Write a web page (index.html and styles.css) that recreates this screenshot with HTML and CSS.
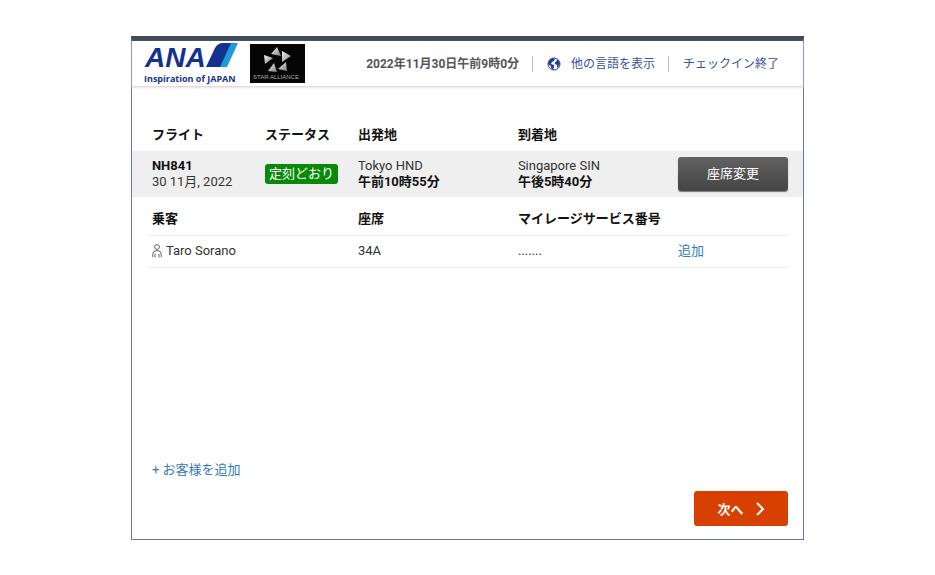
FILE: index.html
```
<!DOCTYPE html>
<html lang="ja">
<head>
    <meta charset="utf-8">
    <title>ANA チェックイン</title>
    <link rel="stylesheet" href="styles.css">
</head>
<body>
    <div class="kiosk">
        <!-- Header -->
        <header class="header">
            <div class="logos">
                <svg class="logo-ana" width="94" height="42" viewBox="0 0 94 42" role="img" aria-label="ANA">
                    <text class="ana-name" x="1" y="24">ANA</text>
                    <path d="M62 24 L71 5 Q74 0 79 0 H90 L79 24 Z" fill="#13318f"/>
                    <path d="M76 24 L87 0 H94 L83 24 Z" fill="#1d9ad8"/>
                    <text class="ana-tagline" x="0" y="39">Inspiration of JAPAN</text>
                </svg>
                <svg class="logo-star" width="55" height="39" viewBox="0 0 55 39" role="img" aria-label="STAR ALLIANCE">
                    <defs>
                        <linearGradient id="silver" x1="0" y1="0" x2="1" y2="1">
                            <stop offset="0" stop-color="#f4f4f4"/>
                            <stop offset="1" stop-color="#7c7c7c"/>
                        </linearGradient>
                    </defs>
                    <rect width="55" height="39" fill="#050505"/>
                    <g fill="url(#silver)">
                        <path d="M27 3 L31 12 L21 10 Z"/>
                        <path d="M32 7 L41 12 L32 18 Z"/>
                        <path d="M36 18 L37 27 L28 25 Z"/>
                        <path d="M24 19 L27 28 L18 27 Z"/>
                        <path d="M14 11 L23 14 L15 20 Z"/>
                    </g>
                    <text class="star-name" x="3" y="35">STAR ALLIANCE</text>
                </svg>
            </div>
            <nav class="nav">
                <span class="now">2022年11月30日午前9時0分</span>
                <a class="language" href="#language">
                    <svg width="14" height="14" viewBox="0 0 14 14" aria-hidden="true">
                        <circle cx="7" cy="7" r="6" fill="#fff" stroke="#24408e"/>
                        <path d="M1 6 L3 2 L6 1 L8 2 L7 4 L5 5 L4 7 L7 8 L7 10 L6 13 L4 11 L4 9 L2 8 Z" fill="#24408e"/>
                        <path d="M8 5 L10 4 L9 2 L12 4 L13 7 L12 8 L11 11 L10 10 L10 8 L8 7 Z" fill="#24408e"/>
                    </svg>
                    他の言語を表示
                </a>
                <a href="#exit">チェックイン終了</a>
            </nav>
        </header>

        <main>
            <!-- Flight -->
            <table class="flights">
                <colgroup>
                    <col class="col-flight"><col class="col-status"><col class="col-from"><col class="col-to"><col>
                </colgroup>
                <thead>
                    <tr>
                        <th>フライト</th>
                        <th>ステータス</th>
                        <th>出発地</th>
                        <th>到着地</th>
                        <td></td>
                    </tr>
                </thead>
                <tbody>
                    <tr>
                        <td><strong>NH841</strong><br>30 11月, 2022</td>
                        <td><span class="status">定刻どおり</span></td>
                        <td>Tokyo HND<br><strong>午前10時55分</strong></td>
                        <td>Singapore SIN<br><strong>午後5時40分</strong></td>
                        <td class="action"><button type="button" class="btn-seat">座席変更</button></td>
                    </tr>
                </tbody>
            </table>

            <!-- Passengers -->
            <div class="passengers-box">
                <table class="passengers">
                    <colgroup>
                        <col class="col-name"><col class="col-seat"><col class="col-number"><col>
                    </colgroup>
                    <thead>
                        <tr>
                            <th>乗客</th>
                            <th>座席</th>
                            <th>マイレージサービス番号</th>
                            <td></td>
                        </tr>
                    </thead>
                    <tbody>
                        <tr>
                            <td>
                                <span class="person">
                                    <svg width="10" height="14" viewBox="0 0 10 14" fill="none" stroke="#666" aria-hidden="true">
                                        <circle cx="5" cy="3" r="2.4"/>
                                        <path d="M0.8 13 V10 Q1 6.5 5 6.5 Q9 6.5 9.2 10 V13 M3 10 V13.5 M7 10 V13.5"/>
                                    </svg>
                                    Taro Sorano
                                </span>
                            </td>
                            <td>34A</td>
                            <td>.......</td>
                            <td><a href="#add-number">追加</a></td>
                        </tr>
                    </tbody>
                </table>
            </div>

            <div class="add-customer"><a href="#add-customer">+ お客様を追加</a></div>
        </main>

        <footer class="footer">
            <button type="button" class="btn-next">
                次へ
                <svg width="9" height="14" viewBox="0 0 9 14" fill="none" stroke="#fff" stroke-width="2" aria-hidden="true">
                    <path d="M1 1 L7 7 L1 13"/>
                </svg>
            </button>
        </footer>
    </div>
</body>
</html>
```
FILE: styles.css
```
* {
    box-sizing: border-box;
}

body {
    margin: 0;
    padding: 36px 14%;
    background: #fff;
    color: #333;
    font-family: Roboto, "Noto Sans CJK JP", sans-serif;
    font-size: 13px;
    line-height: 16px;
}

a {
    color: #337ab7;
    text-decoration: none;
}

button {
    border: none;
    border-radius: 3px;
    color: #fff;
    font-family: inherit;
    font-size: 13px;
    cursor: pointer;
}

.kiosk {
    border: 1px solid #6478b4;
    border-top: 5px solid #414b59;
}

/* Header */
.header {
    display: flex;
    justify-content: space-between;
    align-items: center;
    height: 46px;
    padding: 0 24px 0 12px;
    border-bottom: 1px solid #ddd;
    box-shadow: 0 1px 2px #e4e4e4;
}

.logos {
    display: flex;
    align-items: center;
    gap: 12px;
}

.ana-name {
    fill: #13318f;
    font: italic bold 28px "Liberation Sans", sans-serif;
}

.ana-tagline {
    fill: #13318f;
    font: bold 9px "Open Sans", sans-serif;
}

.star-name {
    fill: #aaa;
    font: 6px "Liberation Sans", sans-serif;
}

.nav {
    display: flex;
    align-items: center;
    font-size: 12px;
}

.nav a {
    margin-left: 13px;
    padding-left: 14px;
    border-left: 1px solid #bbb;
    color: #3c4f9f;
}

.now {
    color: #555;
    font-weight: bold;
}

.language {
    display: flex;
    align-items: center;
    gap: 10px;
}

/* Tables */
table {
    width: 100%;
    border-collapse: collapse;
    table-layout: fixed;
}

th,
td {
    padding: 0;
    text-align: left;
    white-space: nowrap;
}

th,
strong {
    color: #111;
    font-weight: bold;
}

.flights {
    margin-top: 32px;
}

.flights th {
    height: 32px;
}

.flights tbody td {
    height: 46px;
    background: #efefef;
}

.flights tr > :first-child {
    padding-left: 20px;
}

.col-flight {
    width: 133px;
}

.col-status {
    width: 93px;
}

.col-from {
    width: 160px;
}

.col-to {
    width: 160px;
}

.flights .action {
    padding-right: 15px;
    text-align: right;
}

.status {
    display: inline-block;
    padding: 2px 4px;
    border-radius: 3px;
    background: #088a08;
    color: #fff;
}

.btn-seat {
    width: 100%;
    height: 34px;
    padding: 0 0 4px;
    background: linear-gradient(#626262, #444);
    box-shadow: 0 1px 1px #777;
}

/* Passengers */
.passengers-box {
    min-height: 253px;
    padding: 6px 15px 0;
}

.passengers tr > :first-child {
    padding-left: 5px;
}

.passengers th,
.passengers td {
    height: 32px;
    border-bottom: 1px solid #eee;
}

.col-name {
    width: 211px;
}

.col-seat {
    width: 160px;
}

.col-number {
    width: 160px;
}

.person {
    display: flex;
    align-items: center;
    gap: 4px;
}

.add-customer {
    padding: 12px 20px;
}

/* Footer */
.footer {
    display: flex;
    justify-content: flex-end;
    padding: 1px 15px 13px;
}

.btn-next {
    display: flex;
    justify-content: center;
    align-items: center;
    gap: 12px;
    width: 94px;
    height: 35px;
    background: #d84000;
    font-weight: bold;
}
```
